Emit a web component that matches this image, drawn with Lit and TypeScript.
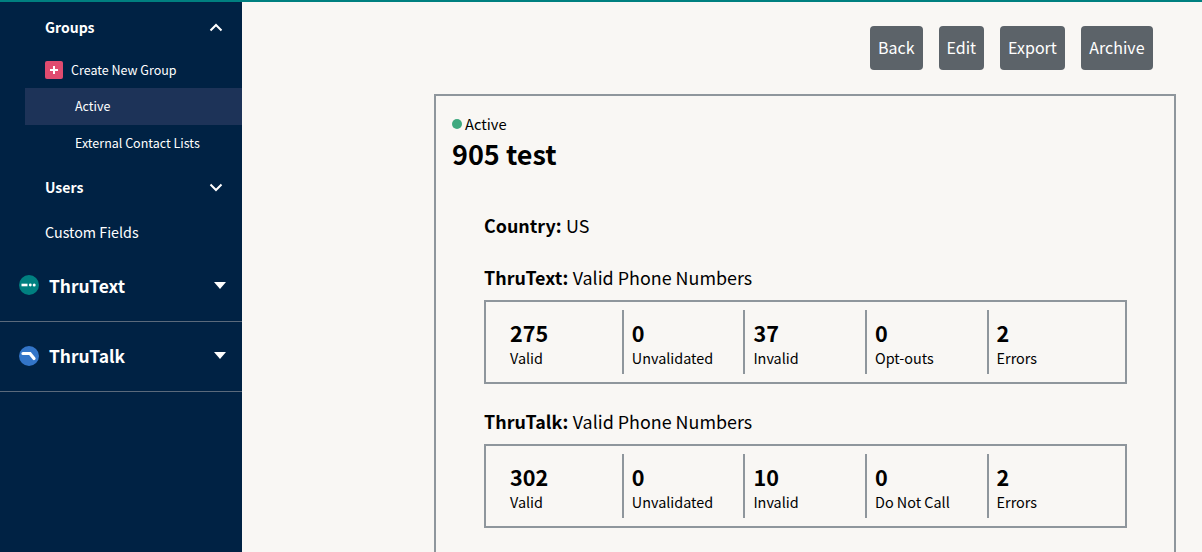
import { LitElement, html, css } from "lit";
import { customElement } from "lit/decorators.js";

const chevron = (up: boolean) => html`<svg class="chev" width="14" height="9" viewBox="0 0 14 9"><path d=${up ? "M1.5 7.5 7 2l5.500 5.500" : "M1.500 1.500 7 7l5.500-5.500"} fill="none" stroke="#fff" stroke-width="2"/></svg>`;
const caret = html`<svg class="caret" width="12" height="7" viewBox="0 0 12 7"><path d="M0 0h12L6 7z" fill="#fff"/></svg>`;

const stat = (n: string, l: string) => html`<div class="stat"><div class="num">${n}</div><div class="lab">${l}</div></div>`;

@customElement("app-root")
export class AppRoot extends LitElement {
  static styles = css`
    :host { display: block; width: 1202px; height: 552px; overflow: hidden; background: #f9f7f4; color: #000;
      font-family: "Noto Sans CJK JP", "Noto Sans", sans-serif; }
    .top { height: 2px; background: #008080; }
    .wrap { display: flex; height: 550px; }
    .side { width: 242px; flex: none; background: #002244; color: #fff; display: flex; flex-direction: column; }
    .row { display: flex; align-items: center; justify-content: space-between; font-size: 14px; font-weight: 700; line-height: 20px; padding: 0 19px 0 45px; }
    .groups { margin-top: 15px; }
    .chev { display: block; }
    .create { display: flex; align-items: center; gap: 8px; margin-top: 23px; padding-left: 45px; font-size: 12.500px; line-height: 20px; }
    .plus { width: 18px; height: 18px; border-radius: 2px; background: #e04b6f; display: flex; align-items: center; justify-content: center; }
    .sub { margin-left: 25px; padding-left: 50px; font-size: 12.500px; line-height: 35px; height: 37px; box-sizing: border-box; }
    .sub.on { background: #1d3358; margin-top: 8px; }
    .users { margin-top: 15px; }
    .cf { margin-top: 25px; font-weight: 400; font-size: 14.300px; }
    .prod { display: flex; align-items: center; padding: 0 16px 2px 19px; border-bottom: 1px solid #5a6a7c; font-size: 17.400px; font-weight: 700; gap: 10px; height: 67px; }
    .prod span { flex: 1; }
    .prod.first { height: 68px; margin-top: 9px; }
    .main { flex: 1; min-width: 0; display: flex; flex-direction: column; }
    .btns { display: flex; gap: 16px; justify-content: flex-end; padding: 24px 49px 0 0; }
    .btn { height: 44px; padding: 0 8px; border-radius: 4px; background: #5c6369; color: #fff; font-size: 16px; line-height: 42px; box-sizing: border-box; }
    .btn:last-child { padding: 0 8.500px; }
    .card { margin: 24px 26px 0 192px; border: 2px solid #8f969c; border-bottom: 0; flex: 1; padding: 19px 16px 0; box-sizing: border-box; }
    .status { display: flex; align-items: center; gap: 3px; font-size: 14.700px; line-height: 18px; }
    .dot { width: 10px; height: 10px; border-radius: 50%; background: #3fa97f; }
    h1 { margin: 3px 0 0; font-size: 27px; line-height: 36px; font-weight: 700; }
    .body { padding: 41px 32px 0; }
    .line { font-size: 17.900px; line-height: 24px; }
    .line b { font-weight: 700; margin-right: 0.500px; }
    .line.c { margin-bottom: 28px; }
    .box { display: flex; height: 84px; box-sizing: border-box; border: 2px solid #8f969c; padding: 8px 0; margin: 11px 0 25px; width: 643px; }
    .stat { width: 121.600px; box-sizing: border-box; border-left: 2px solid #8f969c; padding-left: 8px; }
    .stat:first-child { width: 135.800px; padding-left: 24px; border-left: 0; }
    .num { font-size: 21.600px; line-height: 28px; font-weight: 700; margin-top: 9px; margin-bottom: 1px; }
    .lab { font-size: 14.400px; line-height: 20px; }
  `;
  render() {
    return html`
      <div class="top"></div>
      <div class="wrap">
        <nav class="side">
          <div class="row groups"><span>Groups</span>${chevron(true)}</div>
          <div class="create"><div class="plus"><svg width="8" height="8" viewBox="0 0 8 8"><path d="M4 0v8M0 4h8" stroke="#fff" stroke-width="2"/></svg></div><span>Create New Group</span></div>
          <div class="sub on">Active</div>
          <div class="sub">External Contact Lists</div>
          <div class="row users"><span>Users</span>${chevron(false)}</div>
          <div class="row cf"><span>Custom Fields</span></div>
          <div class="prod first">
            <svg width="20" height="20" viewBox="0 0 20 20"><circle cx="10" cy="10" r="10" fill="#008080"/><path d="M2.500 10h6" stroke="#fff" stroke-width="2.600"/><circle cx="11.300" cy="10" r="1.400" fill="#fff"/><circle cx="15.200" cy="10" r="1.500" fill="#fff"/></svg>
            <span>ThruText</span>${caret}
          </div>
          <div class="prod">
            <svg width="20" height="20" viewBox="0 0 20 20"><circle cx="10" cy="10" r="10" fill="#3375c8"/><path d="M4 7.500h7l4 5" fill="none" stroke="#fff" stroke-width="3.200" stroke-linecap="round"/></svg>
            <span>ThruTalk</span>${caret}
          </div>
        </nav>
        <main class="main">
          <div class="btns">
            <div class="btn">Back</div><div class="btn">Edit</div><div class="btn">Export</div><div class="btn">Archive</div>
          </div>
          <section class="card">
            <div class="status"><i class="dot"></i><span>Active</span></div>
            <h1>905 test</h1>
            <div class="body">
              <div class="line c"><b>Country:</b> US</div>
              <div class="line"><b>ThruText:</b> Valid Phone Numbers</div>
              <div class="box">${stat("275", "Valid")}${stat("0", "Unvalidated")}${stat("37", "Invalid")}${stat("0", "Opt-outs")}${stat("2", "Errors")}</div>
              <div class="line"><b>ThruTalk:</b> Valid Phone Numbers</div>
              <div class="box">${stat("302", "Valid")}${stat("0", "Unvalidated")}${stat("10", "Invalid")}${stat("0", "Do Not Call")}${stat("2", "Errors")}</div>
            </div>
          </section>
        </main>
      </div>
    `;
  }
}
